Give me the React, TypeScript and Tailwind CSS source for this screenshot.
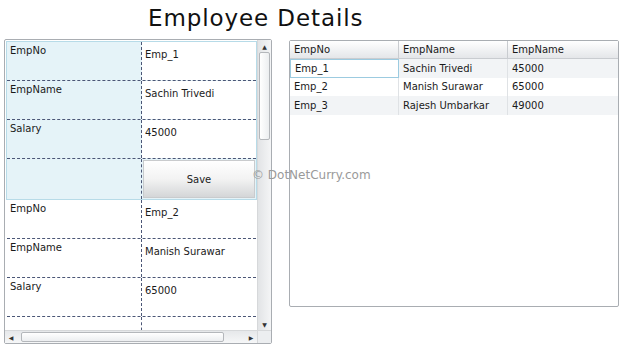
import React from "react";

const font = { fontFamily: '"DejaVu Sans", Verdana, sans-serif' };

type Emp = { no: string; name: string; salary: string };

const employees: Emp[] = [
  { no: "Emp_1", name: "Sachin Trivedi", salary: "45000" },
  { no: "Emp_2", name: "Manish Surawar", salary: "65000" },
  { no: "Emp_3", name: "Rajesh Umbarkar", salary: "49000" },
];

function FieldRow({ label, value, selected }: { label: string; value: string; selected: boolean }) {
  return (
    <div className="flex h-[39px] border-b border-dashed border-[#4b5676]">
      <div className="w-[135px] shrink-0 border-r border-dashed border-[#4b5676] pl-[3px] pt-[1px]">{label}</div>
      <div className={"flex-1 pl-[3px] pt-[5px] " + (selected ? "bg-white" : "")}>{value}</div>
    </div>
  );
}

function ItemCard({ emp, selected }: { emp: Emp; selected: boolean }) {
  return (
    <div className={selected ? "bg-[#e5f3f8] border border-[#b7dbe8]" : "bg-white px-[1px]"}>
      <FieldRow label="EmpNo" value={emp.no} selected={selected} />
      <FieldRow label="EmpName" value={emp.name} selected={selected} />
      <FieldRow label="Salary" value={emp.salary} selected={selected} />
      <div className="flex h-[40px]">
        <div className="w-[135px] shrink-0 border-r border-dashed border-[#4b5676]" />
        <div className="flex-1 p-[1px]">
          {selected ? (
            <div className="h-full flex items-center justify-center bg-gradient-to-b from-white via-[#f3f3f3] to-[#d4d6d8] border border-[#c9cbcd] text-[10px] text-[#222]">
              Save
            </div>
          ) : null}
        </div>
      </div>
    </div>
  );
}

function VScroll() {
  return (
    <div className="w-[14px] shrink-0 flex flex-col bg-gradient-to-r from-[#e2e4e6] to-[#f4f5f6] border-l border-[#d6d8da]">
      <div className="h-[12px] flex items-center justify-center text-[6px] text-[#333]">▲</div>
      <div className="mx-[1px] h-[88px] rounded-[2px] border border-[#b4b7bb] bg-gradient-to-r from-white to-[#eceef0]" />
      <div className="flex-1" />
      <div className="h-[12px] flex items-center justify-center text-[6px] text-[#333]">▼</div>
    </div>
  );
}

function HScroll() {
  return (
    <div className="h-[13px] flex border-t border-[#d6d8da]">
      <div className="flex-1 flex items-center bg-gradient-to-b from-[#e6e8ea] to-[#f6f7f8]">
        <div className="w-[12px] text-center text-[6px] text-[#333]">◀</div>
        <div className="ml-[4px] w-[203px] h-[10px] rounded-[2px] border border-[#b4b7bb] bg-gradient-to-b from-white to-[#eceef0]" />
        <div className="flex-1" />
        <div className="w-[12px] text-center text-[6px] text-[#333]">▶</div>
      </div>
      <div className="w-[14px] bg-[#eceef0] border-l border-[#d6d8da]" />
    </div>
  );
}

function ListPanel() {
  return (
    <div className="w-[268px] h-[305px] border border-[#a9adb2] rounded-[2px] flex flex-col bg-white">
      <div className="flex flex-1 overflow-hidden">
        <div className="flex-1 overflow-hidden pl-[1px] pt-[1px] text-[10px] text-[#1a1a1a]">
          {employees.slice(0, 2).map((e, i) => (
            <ItemCard key={e.no} emp={e} selected={i === 0} />
          ))}
        </div>
        <VScroll />
      </div>
      <HScroll />
    </div>
  );
}

function GridPanel() {
  const cols = ["w-[109px]", "w-[109px]", "flex-1"];
  return (
    <div className="w-[330px] h-[267px] border border-[#a9adb2] rounded-[2px] bg-white text-[10px] text-[#1a1a1a]">
      <div className="flex h-[18px] bg-gradient-to-b from-white to-[#e4e6e9] border-b border-[#c9ccd0]">
        {["EmpNo", "EmpName", "EmpName"].map((h, i) => (
          <div key={i} className={cols[i] + " pl-[4px] flex items-center " + (i < 2 ? "border-r border-[#c9ccd0]" : "")}>
            {h}
          </div>
        ))}
      </div>
      {employees.map((e, r) => (
        <div key={e.no} className={"flex h-[18.5px] " + (r === 1 ? "bg-white" : "bg-[#f2f4f6]")}>
          {[e.no, e.name, e.salary].map((v, i) => (
            <div
              key={i}
              className={
                cols[i] +
                " pl-[4px] flex items-center " +
                (r === 0 && i === 0 ? "border border-[#9ccbe0] bg-white" : i < 2 ? "border-r border-[#dfe2e5]" : "")
              }
            >
              {v}
            </div>
          ))}
        </div>
      ))}
    </div>
  );
}

export default function App() {
  return (
    <div className="w-[624px] h-[348px] bg-white relative overflow-hidden" style={font}>
      <div className="h-[39px] flex items-start pl-[148px] pt-[3px]">
        <h1 className="text-[23px] tracking-[0.9px] text-[#111] leading-[30px]">Employee Details</h1>
      </div>
      <div className="flex items-start pl-[4px] gap-[17px]">
        <ListPanel />
        <div className="pt-[1px]">
          <GridPanel />
        </div>
      </div>
      <div className="absolute left-[252px] top-[166px] text-[12px] text-[#9a9a9a]">© DotNetCurry.com</div>
    </div>
  );
}
